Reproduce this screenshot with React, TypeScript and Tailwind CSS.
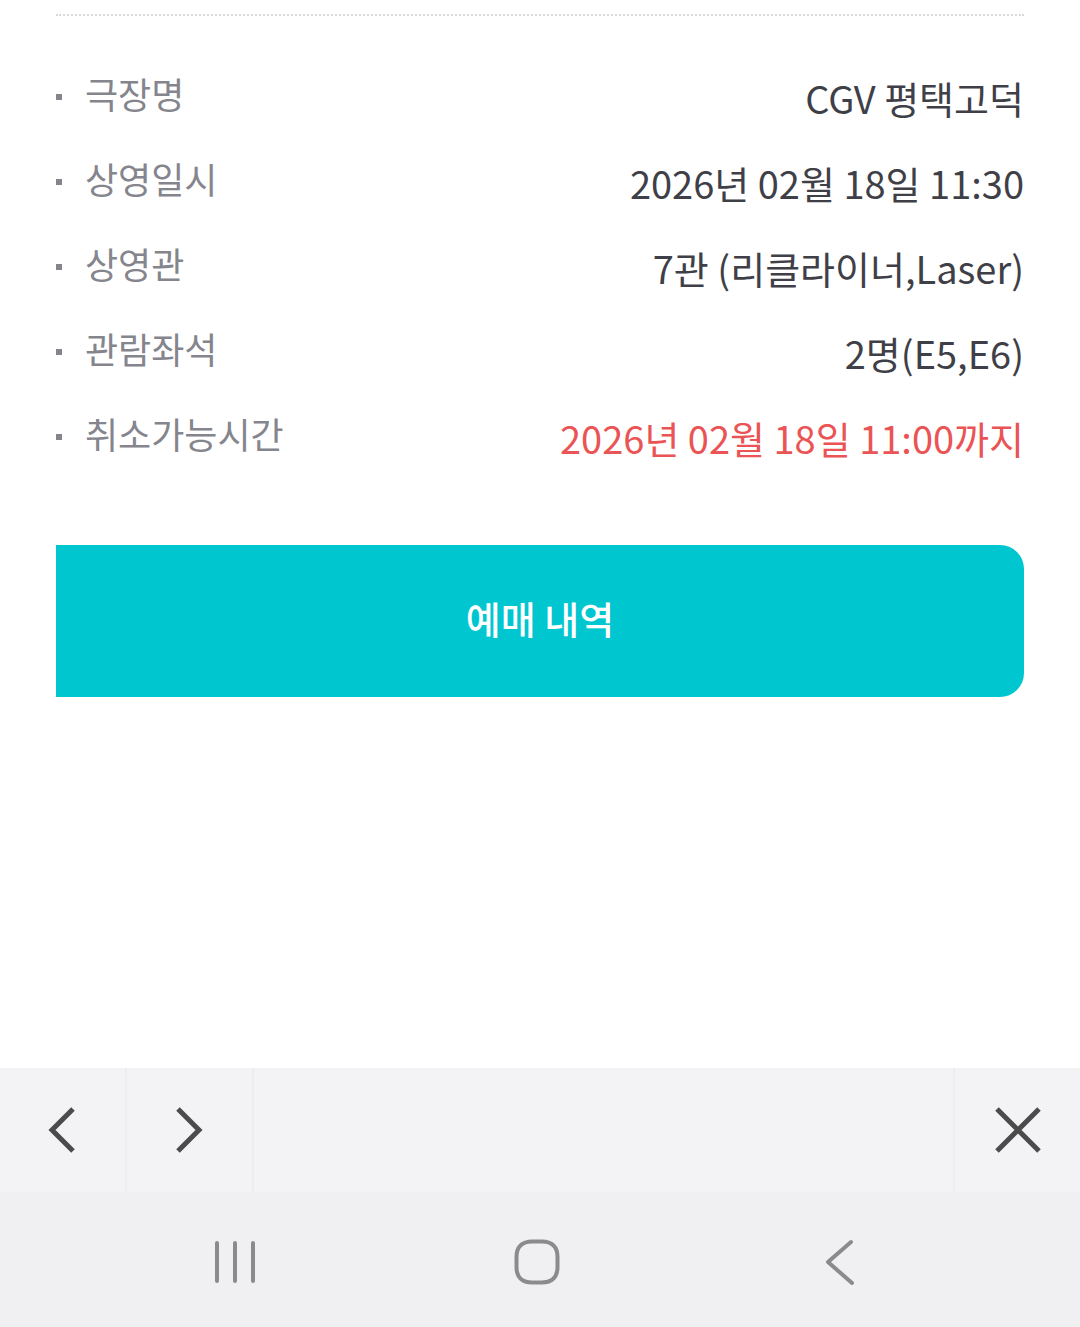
const details = [
  { label: "극장명", value: "CGV 평택고덕" },
  { label: "상영일시", value: "2026년 02월 18일 11:30" },
  { label: "상영관", value: "7관 (리클라이너,Laser)" },
  { label: "관람좌석", value: "2명(E5,E6)" },
  { label: "취소가능시간", value: "2026년 02월 18일 11:00까지", highlight: true },
]

export default function App() {
  return (
    <div className="flex min-h-screen flex-col bg-white font-['Noto_Sans_CJK_KR',sans-serif]">
      {/* Booking details */}
      <main className="flex-1 px-14 pt-[14px]">
        <div className="border-t-2 border-dotted border-[#d9d9d9]" />
        <dl className="mt-10">
          {details.map((item) => (
            <div key={item.label} className="flex h-[85px] items-start justify-between">
              <dt className="flex items-center gap-[23px] text-[36px] leading-[74px] text-[#85858d]">
                <span className="mt-2 h-[6px] w-[6px] bg-[#85858d]" />
                {item.label}
              </dt>
              <dd
                className={
                  item.highlight
                    ? "text-[38px] leading-[84px] text-[#ea5455]"
                    : "text-[38px] leading-[84px] text-[#3f3f48]"
                }
              >
                {item.value}
              </dd>
            </div>
          ))}
        </dl>
        <button
          type="button"
          className="mt-16 h-[152px] w-full rounded-r-3xl bg-[#00c6d0] pb-2 text-[38px] font-medium text-white"
        >
          예매 내역
        </button>
      </main>

      {/* Browser toolbar */}
      <nav className="flex h-[124px] bg-[#f3f3f5]">
        <button type="button" aria-label="Back" className="flex w-[127px] items-center justify-center border-r-2 border-[#ededef]">
          <svg className="h-12 w-12" viewBox="0 0 48 48" fill="none" stroke="#4b4b4b" strokeWidth={5}>
            <path d="M34 3 13 24l21 21" />
          </svg>
        </button>
        <button type="button" aria-label="Forward" className="flex w-[127px] items-center justify-center border-r-2 border-[#ededef]">
          <svg className="h-12 w-12" viewBox="0 0 48 48" fill="none" stroke="#4b4b4b" strokeWidth={5}>
            <path d="m12 3 21 21-21 21" />
          </svg>
        </button>
        <button type="button" aria-label="Close" className="ml-auto flex w-[127px] items-center justify-center border-l-2 border-[#ededef]">
          <svg className="h-12 w-12" viewBox="0 0 48 48" fill="none" stroke="#4b4b4b" strokeWidth={5}>
            <path d="m3 3 42 42M45 3 3 45" />
          </svg>
        </button>
      </nav>

      {/* System navigation */}
      <nav className="flex h-[135px] items-center justify-around bg-[#f0f0f2] pt-1 pr-[90px] pl-[84px]">
        <button type="button" aria-label="Recent apps">
          <svg className="h-12 w-12" viewBox="0 0 48 48" fill="none" stroke="#8b8b8d" strokeWidth={4} strokeLinecap="round">
            <path d="M6 5v38M24 5v38M42 5v38" />
          </svg>
        </button>
        <button type="button" aria-label="Home">
          <svg className="h-12 w-12" viewBox="0 0 48 48" fill="none" stroke="#8b8b8d" strokeWidth={4}>
            <path d="M19 3.5h10C39 3.5 44.5 9 44.5 19v10C44.5 39 39 44.5 29 44.5H19C9 44.5 3.5 39 3.5 29V19C3.5 9 9 3.5 19 3.5Z" />
          </svg>
        </button>
        <button type="button" aria-label="Go back">
          <svg className="h-12 w-12" viewBox="0 0 48 48" fill="none" stroke="#8b8b8d" strokeWidth={4} strokeLinecap="round" strokeLinejoin="round">
            <path d="M36 4 13 24l24 21" />
          </svg>
        </button>
      </nav>
    </div>
  )
}
